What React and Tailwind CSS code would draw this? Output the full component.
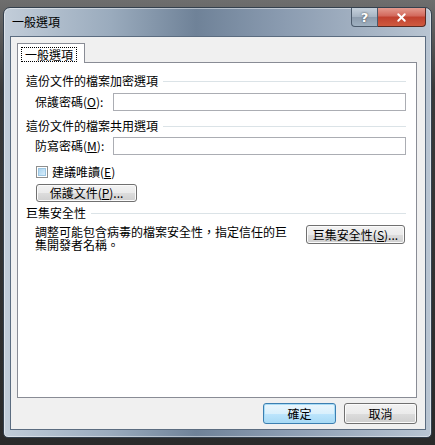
import { X } from 'lucide-react';

const font = { fontFamily: '"Noto Sans CJK TC", "Noto Sans CJK SC", sans-serif' };

function Win7Button({ children, isDefault, className = '' }) {
  return (
    <div
      className={`flex items-center justify-center rounded-[3px] border text-[12px] leading-[12px] text-black ${
        isDefault
          ? 'border-[#3c7fb1] shadow-[inset_0_0_0_1px_#a8dcf6] bg-[linear-gradient(#eaf6fd_0%,#d9f0fc_50%,#bee6fd_50%,#a7d9f5_100%)]'
          : 'border-[#707070] shadow-[inset_0_0_0_1px_#fbfbfb] bg-[linear-gradient(#f2f2f2_0%,#ebebeb_50%,#dddddd_50%,#cfcfcf_100%)]'
      } ${className}`}
    >
      {children}
    </div>
  );
}

function SectionHeader({ title }) {
  return (
    <div className="flex items-center h-[12px] pl-[8px] pr-[10px]">
      <span className="text-[12px] leading-[12px] whitespace-nowrap">{title}</span>
      <div className="flex-1 h-px bg-[#dbe3e7] ml-[5px]" />
    </div>
  );
}

function PasswordRow({ label, letter }) {
  return (
    <div className="flex items-center h-[18px] pl-[17px] pr-[10px]">
      <span className="w-[78px] text-[12px] leading-[12px] whitespace-nowrap">
        {label}(<u>{letter}</u>):
      </span>
      <div className="flex-1 h-[18px] border border-[#abadb3] bg-white" />
    </div>
  );
}

export default function App() {
  return (
    <div
      className="w-[435px] h-[445px] pt-[7px] px-[3px] bg-[linear-gradient(180deg,#6e6e6e_0%,#3a3a3a_20%,#2a2a2a_100%)] overflow-hidden"
      style={font}
    >
      {/* Window frame */}
      <div className="w-[429px] h-[431px] flex flex-col rounded-t-[7px] rounded-b-[5px] border border-[#34404d] bg-[linear-gradient(90deg,#c2cdd9_0%,#9aabbd_25%,#6f8298_45%,#8a9bb0_65%,#b9c5d2_100%)] shadow-[inset_0_0_0_1px_rgba(255,255,255,0.45)]">
        {/* Title bar */}
        <div className="h-[28px] flex items-start pl-[8px] pr-[5px]">
          <span className="mt-[8px] text-[12px] leading-[12px] text-black">一般選項</span>
          <div className="ml-auto flex">
            <div className="w-[27px] h-[19px] flex items-center justify-center rounded-bl-[4px] border border-[#4b5a6b] border-t-0 bg-[linear-gradient(#c6d1dc_0%,#a5b3c2_50%,#8d9cad_50%,#9fb0c0_100%)]">
              <span className="text-white font-bold text-[13px] leading-[13px] [text-shadow:0_0_2px_#333]" style={{ fontFamily: '"DejaVu Sans", sans-serif' }}>?</span>
            </div>
            <div className="w-[48px] h-[19px] flex items-center justify-center rounded-br-[4px] border border-l-0 border-t-0 border-[#5a2a22] bg-[linear-gradient(#e49b8f_0%,#d2675a_45%,#c0402e_50%,#cf5a3f_100%)]">
              <X size={13} strokeWidth={3.5} color="#ffffff" />
            </div>
          </div>
        </div>

        {/* Client area */}
        <div className="flex-1 ml-[6px] mr-[5px] mb-[7px] border border-[#5b6c80] bg-[#f0f0f0] flex flex-col pt-[6px] pl-[6px] pr-[8px]">
          {/* Tab */}
          <div className="relative z-10 -mb-px w-[68px] h-[20px] border border-b-0 border-[#898c95] bg-white flex items-start justify-start pt-[3px] pl-[3px]">
            <span className="border border-dotted border-black px-[3px] text-[12px] leading-[13px] text-black">一般選項</span>
          </div>

          {/* Tab panel */}
          <div className="h-[336px] border border-[#898c95] bg-white flex flex-col pt-[12px] text-black">
            <SectionHeader title="這份文件的檔案加密選項" />
            <div className="mt-[6px]">
              <PasswordRow label="保護密碼" letter="O" />
            </div>
            <div className="mt-[9px]">
              <SectionHeader title="這份文件的檔案共用選項" />
            </div>
            <div className="mt-[5px]">
              <PasswordRow label="防寫密碼" letter="M" />
            </div>

            <div className="mt-[10px] flex items-center h-[13px] pl-[18px]">
              <div className="w-[12px] h-[12px] border border-[#8e8f8f] bg-white p-px">
                <div className="w-full h-full bg-[linear-gradient(135deg,#a9d3ef_0%,#d8edfa_100%)] border border-[#9cc6e2]" />
              </div>
              <span className="ml-[4px] text-[12px] leading-[12px]">
                建議唯讀(<u>E</u>)
              </span>
            </div>

            <div className="mt-[6px] pl-[18px]">
              <Win7Button className="w-[101px] h-[18px]">
                保護文件(<u>P</u>)...
              </Win7Button>
            </div>

            <div className="mt-[5px]">
              <SectionHeader title="巨集安全性" />
            </div>

            <div className="mt-[6px] flex items-start pl-[17px] pr-[11px]">
              <p className="w-[256px] text-[12px] leading-[13px]">
                調整可能包含病毒的檔案安全性，指定信任的巨
                <br />
                集開發者名稱。
              </p>
              <Win7Button className="ml-auto w-[99px] h-[19px]">
                巨集安全性(<u>S</u>)...
              </Win7Button>
            </div>
          </div>

          {/* Bottom buttons */}
          <div className="mt-[5px] flex justify-end gap-[8px]">
            <Win7Button isDefault className="w-[73px] h-[21px]">確定</Win7Button>
            <Win7Button className="w-[73px] h-[21px]">取消</Win7Button>
          </div>
        </div>
      </div>
    </div>
  );
}
